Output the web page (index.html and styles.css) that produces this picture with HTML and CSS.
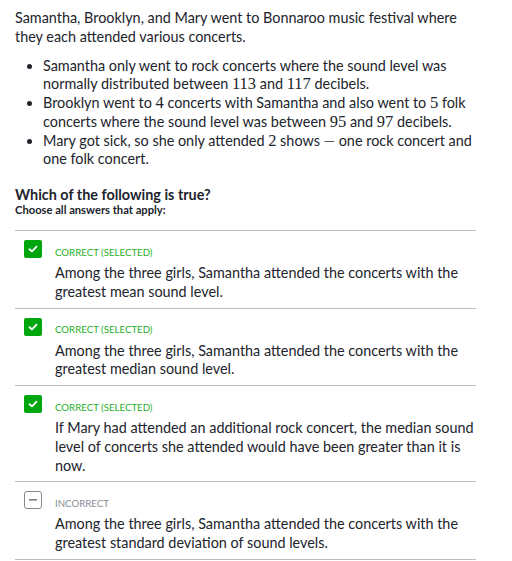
FILE: index.html
```html
<!DOCTYPE html>
<html>
<head>
<meta charset="utf-8">
<link rel="stylesheet" href="styles.css">
</head>
<body>
<div class="page">
  <p class="intro">Samantha, Brooklyn, and Mary went to Bonnaroo music festival where they each attended various concerts.</p>
  <ul class="facts">
    <li>Samantha only went to rock concerts where the sound level was normally distributed between <span class="m">113</span> and <span class="m">117</span> decibels.</li>
    <li>Brooklyn went to <span class="m">4</span> concerts with Samantha and also went to <span class="m">5</span> folk concerts where the sound level was between <span class="m">95</span> and <span class="m">97</span> decibels.</li>
    <li>Mary got sick, so she only attended <span class="m">2</span> shows <span class="dash">—</span> one rock concert and one folk concert.</li>
  </ul>
  <h2 class="question">Which of the following is true?</h2>
  <div class="instr">Choose all answers that apply:</div>
  <div class="choices">
    <div class="choice">
      <div class="head">
        <span class="box ok"><svg width="10" height="8" viewBox="0 0 10 8"><path d="M1.5 4.2 L4 6.4 L8.5 1.6" fill="none" stroke="#fff" stroke-width="1.8" stroke-linecap="round" stroke-linejoin="round"/></svg></span>
        <span class="label ok">Correct (selected)</span>
      </div>
      <div class="text">Among the three girls, Samantha attended the concerts with the greatest mean sound level.</div>
    </div>
    <div class="choice">
      <div class="head">
        <span class="box ok"><svg width="10" height="8" viewBox="0 0 10 8"><path d="M1.5 4.2 L4 6.4 L8.5 1.6" fill="none" stroke="#fff" stroke-width="1.8" stroke-linecap="round" stroke-linejoin="round"/></svg></span>
        <span class="label ok">Correct (selected)</span>
      </div>
      <div class="text">Among the three girls, Samantha attended the concerts with the greatest median sound level.</div>
    </div>
    <div class="choice">
      <div class="head">
        <span class="box ok"><svg width="10" height="8" viewBox="0 0 10 8"><path d="M1.5 4.2 L4 6.4 L8.5 1.6" fill="none" stroke="#fff" stroke-width="1.8" stroke-linecap="round" stroke-linejoin="round"/></svg></span>
        <span class="label ok">Correct (selected)</span>
      </div>
      <div class="text">If Mary had attended an additional rock concert, the median sound level of concerts she attended would have been greater than it is now.</div>
    </div>
    <div class="choice">
      <div class="head">
        <span class="box no"><svg width="8" height="2" viewBox="0 0 8 2"><rect x="0" y="0" width="8" height="1.6" fill="#7d8187"/></svg></span>
        <span class="label no">Incorrect</span>
      </div>
      <div class="text">Among the three girls, Samantha attended the concerts with the greatest standard deviation of sound levels.</div>
    </div>
  </div>
</div>
</body>
</html>
```

FILE: styles.css
```css
html, body {
  margin: 0;
  padding: 0;
  background: #fff;
}
body {
  font-family: Lato, "Open Sans", sans-serif;
  font-size: 14.4px;
  line-height: 18.75px;
  color: #21242c;
}
.page {
  padding: 9px 36px 0 15px;
}
.intro {
  margin: 0;
}
.facts {
  margin: 10px 0 0 0;
  padding-left: 28px;
}
.facts li {
  margin: 0;
}
.m {
  font-family: "Liberation Serif", "DejaVu Serif", serif;
  font-size: 16.5px;
  line-height: 1;
}
.dash {
  color: #555;
}
.question {
  margin: 17px 0 0 0;
  font-size: 14.4px;
  font-weight: 700;
  line-height: 17px;
}
.instr {
  font-size: 11.2px;
  font-weight: 700;
  line-height: 14px;
  margin-top: 0;
}
.choices {
  margin-top: 13px;
  border-top: 1px solid #babec2;
}
.choice {
  border-bottom: 1px solid #babec2;
  padding: 9px 0 6px 9px;
}
.head {
  display: flex;
  align-items: center;
  gap: 13px;
  height: 18px;
}
.box {
  width: 18px;
  height: 18px;
  box-sizing: border-box;
  border-radius: 2px;
  display: flex;
  align-items: center;
  justify-content: center;
  flex: none;
}
.box.ok {
  background: #00a60e;
}
.box.no {
  background: #fff;
  border: 1px solid #868a90;
  border-radius: 3px;
}
.label {
  font-size: 9.7px;
  text-transform: uppercase;
  line-height: 12px;
  margin-top: 5px;
}
.label.ok {
  color: #1fb01f;
}
.label.no {
  color: #888c92;
}
.text {
  margin-top: 6px;
  padding-left: 31px;
}
```
